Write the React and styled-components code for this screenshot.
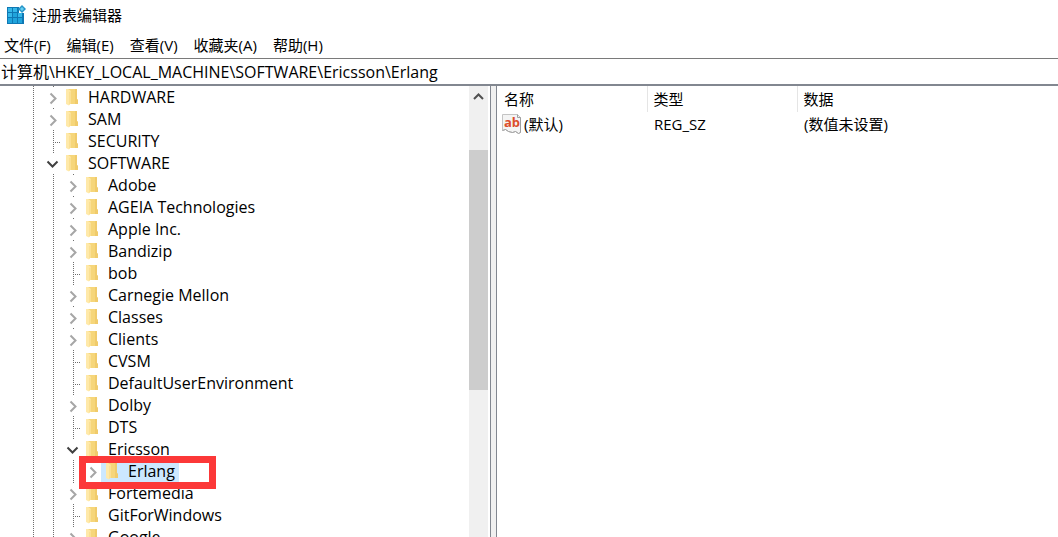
import React from "react";
import styled, { createGlobalStyle, css } from "styled-components";

const Global = createGlobalStyle`
  * { box-sizing: border-box; }
  body {
    margin: 0;
    background: #fff;
    color: #000;
    font: 15px/22px "Open Sans", "Noto Sans CJK SC", sans-serif;
  }
  button, input { font: inherit; color: inherit; }
`;

const Window = styled.div`
  display: flex;
  flex-direction: column;
  height: 100vh;
  overflow: hidden;
`;

const TitleBar = styled.header`
  display: flex;
  align-items: center;
  gap: 6px;
  height: 30px;
  padding-left: 6px;
  flex: none;
`;

const Title = styled.h1`
  margin: 0;
  font-size: 15px;
  font-weight: 400;
`;

const MenuBar = styled.nav`
  display: flex;
  gap: 16px;
  height: 28px;
  padding: 4px 4px 0;
  flex: none;
`;

const MenuButton = styled.button`
  border: 0;
  padding: 0;
  background: none;
  line-height: 22px;
  height: 22px;
`;

const AddressInput = styled.input`
  display: block;
  width: 100%;
  height: 28px;
  flex: none;
  border: 0;
  border-top: 1px solid #7a7a7a;
  border-bottom: 2px solid #828790;
  padding: 0 1px 2px;
  outline: 0;
  background: #fff;
  font-size: 16px;
`;

const Panes = styled.main`
  display: flex;
  flex: 1;
  min-height: 0;
`;

const TreePane = styled.section`
  display: flex;
  flex: 0 0 490px;
  min-width: 0;
`;

const Tree = styled.ul`
  flex: 1;
  margin: 0;
  padding: 0 0 0 21px;
  list-style: none;
  overflow: hidden;
  font-size: 16px;
`;

const TreeRow = styled.li`
  position: relative;
  display: flex;
  height: 22px;
`;

const dots = (dir) => css`repeating-linear-gradient(${dir}, #6e6e6e 0 1px, transparent 1px 2px)`;

const Guide = styled.span`
  flex: none;
  width: 20px;
  background: ${dots("to bottom")} 12px 0 / 1px 100% no-repeat;
`;

const LeafGuide = styled(Guide)`
  background:
    ${dots("to bottom")} 12px 0 / 1px 100% no-repeat,
    ${dots("to right")} 12px 12px / 9px 1px no-repeat;
`;

const Toggle = styled.button`
  flex: none;
  width: 20px;
  height: 22px;
  border: 0;
  padding: 0;
  background: ${dots("to bottom")} 12px 0 / 1px 1px no-repeat;

  svg { display: block; }
`;

const Item = styled.span`
  display: flex;
  align-items: center;
  gap: 9px;
  padding: 0 4px;
  white-space: nowrap;
  background: ${(p) => (p.$selected ? "#cce8ff" : "none")};

  svg { flex: none; }
`;

const Highlight = styled.span`
  position: absolute;
  left: 58px;
  top: -4px;
  z-index: 1;
  width: 137px;
  height: 33px;
  border: 7px solid #fc3838;
`;

const ScrollBar = styled.div`
  display: flex;
  flex-direction: column;
  flex: none;
  width: 20px;
  margin-right: 1px;
  border-right: 1px solid #fff;
  background: #f0f0f0;
`;

const ScrollButton = styled.button`
  height: 22px;
  border: 0;
  padding: 0;
  background: none;
  flex: none;

  svg { display: block; }
`;

const ScrollTrack = styled.div`
  flex: 1;
  padding-top: 42px;
`;

const ScrollThumb = styled.div`
  height: 62%;
  background: #cdcdcd;
`;

const Splitter = styled.div`
  flex: 0 0 7px;
  border: 1px solid #828790;
  border-width: 0 1px;
  background: #f0f0f0;
`;

const ValuesPane = styled.section`
  flex: 1;
  min-width: 0;
  overflow: hidden;
`;

const ValuesTable = styled.table`
  width: 100%;
  table-layout: fixed;
  border-collapse: collapse;
  text-align: left;
`;

const HeadCell = styled.th`
  width: ${(p) => p.$width || "auto"};
  height: 26px;
  padding: 0 ${(p) => (p.$divided ? "6px" : "7px")};
  font-weight: 400;
  border-left: ${(p) => (p.$divided ? "1px solid #e5e5e5" : "0")};
`;

const Cell = styled.td`
  height: 26px;
  padding: 0 7px 2px;
  white-space: nowrap;
`;

const ValueName = styled.span`
  display: flex;
  align-items: center;
  gap: 2px;
  margin-left: -2px;
`;

const RegistryIcon = () => (
  <svg width="20" height="20" viewBox="0 0 20 20" aria-hidden="true">
    <path d="M1 2h12v5h5v12H1z" fill="#0f78b4" />
    <path d="M2 3h4v4H2zM7 3h4v4H7zM2 8h4v4H2zM12 8h4v4h-4z" fill="#35b7e8" />
    <path d="M7 8h4v4H7zM2 13h4v5H2zM7 13h4v5H7zM12 13h4v5h-4z" fill="#20a4dc" />
    <path d="M13 1h6v7h-6z" fill="#fff" />
    <path d="M16 0l4 4-4 4-4-4z" fill="#2494c8" />
    <path d="M16 2l2 2-2 2-2-2z" fill="#68cff2" />
  </svg>
);

const FolderIcon = () => (
  <svg width="14" height="18" viewBox="0 0 14 18" aria-hidden="true">
    <path d="M2 1h10v10l1 1v4H2z" fill="#f6d67a" />
    <path d="M10 1h2v10l1 1v4h-3z" fill="#f0cb6b" />
    <path d="M1 1h2l3 2v12l-1 1-1 1.500L1 16z" fill="#ffe9a9" />
    <path d="M4 4l2-1v12l-2 2z" fill="#fbe094" />
  </svg>
);

const Chevron = ({ open }) => (
  <svg width="20" height="22" viewBox="0 0 20 22" aria-hidden="true">
    {open ? (
      <path d="M6.5 9.5l5 5 5-5" fill="none" stroke="#404040" strokeWidth="2" />
    ) : (
      <path d="M9.5 7.5l5 5-5 5" fill="none" stroke="#a6a6a6" strokeWidth="2" />
    )}
  </svg>
);

const StringIcon = () => (
  <svg width="20" height="20" viewBox="0 0 20 20" aria-hidden="true">
    <path d="M.5 .5h15l3 3v15l-2 1-3-2-3 1-4-1-3-2-3 1z" fill="#f4f4f4" stroke="#c4c4c4" />
    <path d="M15.500 .5v3h3v15l-2 1-3-2-3 1-4-1-3-2-3 1" fill="none" stroke="#a0a0a0" />
    <text x="2" y="13" fontFamily="Open Sans, sans-serif" fontSize="13" fontWeight="700" fill="#dc4d2b">ab</text>
  </svg>
);

const ROWS = [
  { name: "HARDWARE", depth: 1, state: "closed" },
  { name: "SAM", depth: 1, state: "closed" },
  { name: "SECURITY", depth: 1, state: "leaf" },
  { name: "SOFTWARE", depth: 1, state: "open" },
  { name: "Adobe", depth: 2, state: "closed" },
  { name: "AGEIA Technologies", depth: 2, state: "closed" },
  { name: "Apple Inc.", depth: 2, state: "closed" },
  { name: "Bandizip", depth: 2, state: "closed" },
  { name: "bob", depth: 2, state: "leaf" },
  { name: "Carnegie Mellon", depth: 2, state: "closed" },
  { name: "Classes", depth: 2, state: "closed" },
  { name: "Clients", depth: 2, state: "closed" },
  { name: "CVSM", depth: 2, state: "leaf" },
  { name: "DefaultUserEnvironment", depth: 2, state: "leaf" },
  { name: "Dolby", depth: 2, state: "closed" },
  { name: "DTS", depth: 2, state: "leaf" },
  { name: "Ericsson", depth: 2, state: "open" },
  { name: "Erlang", depth: 3, state: "closed", selected: true },
  { name: "Fortemedia", depth: 2, state: "closed" },
  { name: "GitForWindows", depth: 2, state: "leaf" },
  { name: "Google", depth: 2, state: "closed" },
];

const MENUS = ["文件(F)", "编辑(E)", "查看(V)", "收藏夹(A)", "帮助(H)"];

function TreeNode({ name, depth, state, selected }) {
  return (
    <TreeRow
      role="treeitem"
      aria-level={depth}
      aria-selected={!!selected}
      aria-expanded={state === "leaf" ? undefined : state === "open"}
    >
      {Array.from({ length: depth }, (_, i) => (
        <Guide key={i} />
      ))}
      {state === "leaf" ? (
        <LeafGuide />
      ) : (
        <Toggle type="button" aria-label={name}>
          <Chevron open={state === "open"} />
        </Toggle>
      )}
      <Item $selected={selected}>
        <FolderIcon />
        {name}
      </Item>
      {selected && <Highlight />}
    </TreeRow>
  );
}

export default function App() {
  return (
    <Window>
      <Global />
      <TitleBar>
        <RegistryIcon />
        <Title>注册表编辑器</Title>
      </TitleBar>
      <MenuBar>
        {MENUS.map((m) => (
          <MenuButton key={m} type="button">{m}</MenuButton>
        ))}
      </MenuBar>
      <AddressInput
        aria-label="地址"
        defaultValue={"计算机\\HKEY_LOCAL_MACHINE\\SOFTWARE\\Ericsson\\Erlang"}
      />
      <Panes>
        <TreePane>
          <Tree role="tree">
            {ROWS.map((r) => (
              <TreeNode key={r.name} {...r} />
            ))}
          </Tree>
          <ScrollBar>
            <ScrollButton type="button" aria-label="向上滚动">
              <svg width="19" height="22" viewBox="0 0 19 22" aria-hidden="true">
                <path d="M5 13l4.500-4.500L14 13" fill="none" stroke="#505050" strokeWidth="2" />
              </svg>
            </ScrollButton>
            <ScrollTrack>
              <ScrollThumb />
            </ScrollTrack>
          </ScrollBar>
        </TreePane>
        <Splitter />
        <ValuesPane>
          <ValuesTable>
            <thead>
              <tr>
                <HeadCell $width="150px">名称</HeadCell>
                <HeadCell $width="150px" $divided>类型</HeadCell>
                <HeadCell $divided>数据</HeadCell>
              </tr>
            </thead>
            <tbody>
              <tr>
                <Cell>
                  <ValueName>
                    <StringIcon />
                    (默认)
                  </ValueName>
                </Cell>
                <Cell>REG_SZ</Cell>
                <Cell>(数值未设置)</Cell>
              </tr>
            </tbody>
          </ValuesTable>
        </ValuesPane>
      </Panes>
    </Window>
  );
}
